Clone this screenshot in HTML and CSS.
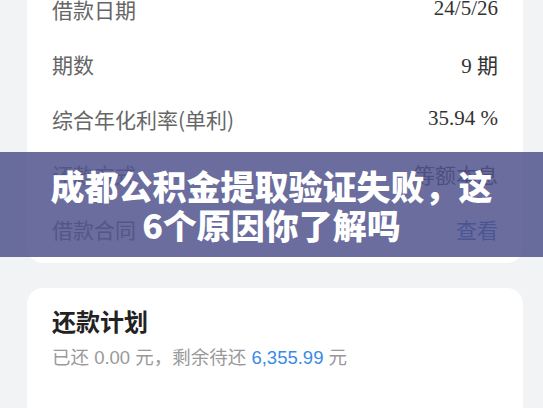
FILE: index.html
```html
<!DOCTYPE html>
<html lang="zh-CN">
  <head>
    <meta charset="UTF-8" />
    <meta name="viewport" content="width=device-width, initial-scale=1.0" />
    <title>成都公积金提取验证失败，这6个原因你了解吗</title>
    <link rel="stylesheet" href="styles.css">
  </head>
  <body>
    <div class="page">
      <div class="card loan-info">
        <div class="row">
          <span class="label">借款日期</span>
          <span class="value">24/5/26</span>
        </div>
        <div class="row">
          <span class="label">期数</span>
          <span class="value">9 期</span>
        </div>
        <div class="row">
          <span class="label">综合年化利率(单利)</span>
          <span class="value">35.94 %</span>
        </div>
        <div class="row">
          <span class="label">还款方式</span>
          <span class="value cjk">等额本息</span>
        </div>
        <div class="row">
          <span class="label">借款合同</span>
          <a class="link" href="#">查看</a>
        </div>
      </div>

      <div class="card plan">
        <h3>还款计划</h3>
        <p class="summary">已还 0.00 元，剩余待还 <span class="amount">6,355.99</span> 元</p>
      </div>
    </div>

    <div class="banner">
      <h1>成都公积金提取验证失败，这<br>6个原因你了解吗</h1>
    </div>
  </body>
</html>
```

FILE: styles.css
```css
body {
  margin: 0;
  background-color: #f2f3f5;
  font-family: "Liberation Sans", "Noto Sans CJK SC", sans-serif;
  overflow: hidden;
}
.page {
  padding: 0 20px 0 27px;
}
.card {
  background: white;
  border-radius: 16px;
  padding: 0 25px;
}
.loan-info {
  margin-top: -30px;
  padding-top: 11px;
  padding-bottom: 7px;
}
.row {
  display: flex;
  justify-content: space-between;
  align-items: center;
  height: 55px;
}
.label {
  font-family: "Noto Sans CJK SC", sans-serif;
  font-size: 21px;
  color: #666;
}
.value {
  font-family: "Liberation Serif", "Noto Sans CJK SC", serif;
  font-size: 21px;
  color: #333;
}
.value.cjk {
  font-family: "Noto Sans CJK SC", sans-serif;
  font-size: 21px;
}
.link {
  font-family: "Noto Sans CJK SC", sans-serif;
  font-size: 21px;
  color: #2d62c0;
  text-decoration: none;
}
.plan {
  margin-top: 25px;
  padding-top: 16px;
  height: 200px;
}
.plan h3 {
  margin: 0;
  font-family: "Noto Sans CJK SC", sans-serif;
  font-size: 24px;
  line-height: 34px;
  font-weight: bold;
  color: #222;
}
.summary {
  margin: 7px 0 0;
  font-size: 18.5px;
  line-height: 26px;
  color: #999;
}
.amount {
  color: #3a8ae6;
}
/* title strip laid over the page */
.banner {
  position: absolute;
  left: 0;
  right: 0;
  top: 152px;
  height: 105px;
  display: flex;
  align-items: center;
  justify-content: center;
  background-color: rgba(80, 84, 140, 0.85);
}
.banner h1 {
  margin: 0;
  font-family: "Noto Sans CJK SC", sans-serif;
  font-size: 34px;
  line-height: 39px;
  font-weight: 900;
  color: white;
  text-align: center;
}
```
